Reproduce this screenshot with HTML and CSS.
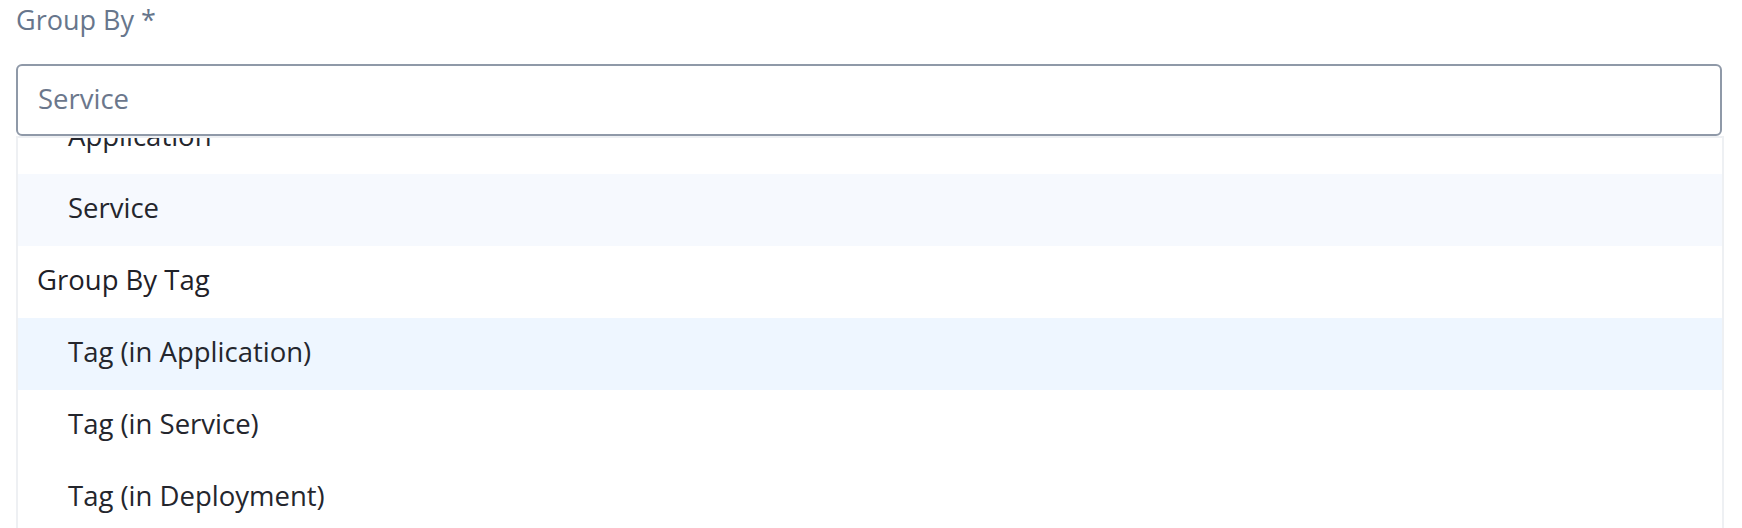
FILE: index.html
```html
<!DOCTYPE html>
<html lang="en">
<head>
<meta charset="utf-8">
<title>Group By</title>
<link rel="stylesheet" href="styles.css">
</head>
<body>
<div class="field">
  <label class="field-label">Group By *</label>
  <div class="select-input">Service</div>
  <div class="menu">
    <ul class="menu-list">
      <li class="option">Application</li>
      <li class="option option-hover">Service</li>
      <li class="group-header">Group By Tag</li>
      <li class="option option-active">Tag (in Application)</li>
      <li class="option">Tag (in Service)</li>
      <li class="option">Tag (in Deployment)</li>
    </ul>
  </div>
</div>
</body>
</html>
```
FILE: styles.css
```css
html, body {
  margin: 0;
  padding: 0;
  background: #ffffff;
}
body {
  font-family: "Open Sans", Lato, sans-serif;
  overflow: hidden;
}
.field {
  padding: 0 20px 0 16px;
  display: flex;
  flex-direction: column;
}
.field-label {
  display: block;
  color: #67768c;
  font-size: 27px;
  line-height: 34px;
  padding: 3px 0 0 0;
  height: 64px;
  box-sizing: border-box;
}
.select-input {
  height: 72px;
  box-sizing: border-box;
  border: 2px solid #8f99a8;
  border-radius: 6px;
  padding: 0 0 4px 20px;
  display: flex;
  align-items: center;
  color: #6b778c;
  font-size: 27.5px;
}
.menu {
  height: 400px;
  overflow: hidden;
  border: 2px solid #eef0f3;
  border-bottom: none;
  margin-right: -2px;
}
.menu-list {
  list-style: none;
  margin: -36px 0 0 0;
  padding: 0;
}
.option, .group-header {
  height: 72px;
  box-sizing: border-box;
  padding-bottom: 6px;
  display: flex;
  align-items: center;
  font-size: 27.5px;
  color: #24262d;
}
.option {
  padding-left: 50px;
}
.group-header {
  padding-left: 19px;
  font-weight: 500;
  color: #1f2128;
}
.option-hover {
  background: #f6f9fe;
}
.option-active {
  background: #eef6ff;
}
```
